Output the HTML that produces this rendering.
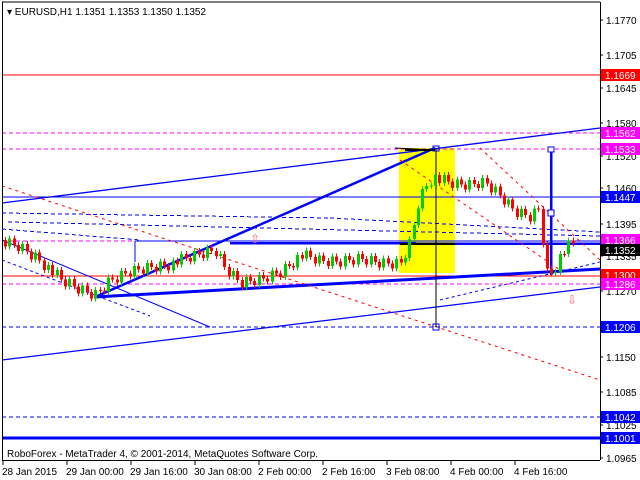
<!DOCTYPE html>
<html><head><meta charset="utf-8"><style>
html,body{margin:0;padding:0;background:#fff;width:640px;height:480px;overflow:hidden}
svg{display:block;font-family:"Liberation Sans",sans-serif}
</style></head><body>
<svg id="s" width="640" height="480" xmlns="http://www.w3.org/2000/svg" shape-rendering="crispEdges">
<rect x="0" y="0" width="640" height="480" fill="#fff"/>
<rect x="399" y="148" width="56" height="125" fill="#ffff00"/>
<line x1="2" y1="75" x2="600" y2="75" stroke="#f00"/>
<line x1="2" y1="133" x2="600" y2="133" stroke="#f0f" stroke-dasharray="4,3"/>
<line x1="2" y1="149" x2="600" y2="149" stroke="#f0f" stroke-dasharray="4,3"/>
<line x1="2" y1="197" x2="600" y2="197" stroke="#00f"/>
<line x1="2" y1="241" x2="600" y2="241" stroke="#f0f" stroke-dasharray="4,3"/>
<line x1="135" y1="241" x2="600" y2="241" stroke="#00f"/>
<line x1="230" y1="243" x2="600" y2="244" stroke="#00f" stroke-width="2.5"/>
<line x1="135" y1="241" x2="135" y2="262" stroke="#00f"/>
<line x1="2" y1="276" x2="600" y2="276" stroke="#f00"/>
<line x1="2" y1="284" x2="600" y2="284" stroke="#f0f" stroke-dasharray="4,3"/>
<line x1="2" y1="327" x2="600" y2="327" stroke="#00f" stroke-dasharray="4,3"/>
<line x1="2" y1="417" x2="600" y2="417" stroke="#00f" stroke-dasharray="4,3"/>
<line x1="2" y1="438" x2="600" y2="438" stroke="#00f" stroke-width="3"/>
<line x1="2" y1="213" x2="330" y2="218" stroke="#00f" stroke-dasharray="4,3"/>
<line x1="330" y1="218" x2="600" y2="232" stroke="#00f" stroke-dasharray="4,3"/>
<line x1="8" y1="222" x2="600" y2="236" stroke="#00f" stroke-dasharray="4,3"/>
<line x1="2" y1="229" x2="140" y2="240" stroke="#00f" stroke-dasharray="4,3"/>
<g shape-rendering="auto">
<line x1="2" y1="203" x2="600" y2="128" stroke="#00f" stroke-width="1.3"/>
<line x1="2" y1="360" x2="600" y2="287" stroke="#00f" stroke-width="1.3"/>
<line x1="95" y1="297" x2="435" y2="148" stroke="#00f" stroke-width="2.5"/>
<line x1="95" y1="297" x2="600" y2="269" stroke="#00f" stroke-width="3"/>
<line x1="2" y1="186" x2="600" y2="380" stroke="#f00" stroke-dasharray="3,4"/>
<line x1="480" y1="148" x2="600" y2="260" stroke="#f00" stroke-dasharray="3,4"/>
<line x1="400" y1="160" x2="560" y2="270" stroke="#f00" stroke-dasharray="3,4"/>
<line x1="2" y1="240" x2="210" y2="327" stroke="#00f" stroke-width="1"/>
<line x1="2" y1="260" x2="150" y2="316" stroke="#00f" stroke-dasharray="3,3"/>
<line x1="440" y1="300" x2="600" y2="262" stroke="#00f" stroke-dasharray="3,3"/>
<line x1="395" y1="148" x2="435" y2="150" stroke="#000"/>
<line x1="405" y1="150" x2="435" y2="150" stroke="#000" stroke-width="2"/>
<line x1="400" y1="244" x2="455" y2="244" stroke="#000" stroke-width="2"/>
</g>
<line x1="436" y1="148" x2="436" y2="327" stroke="#000"/>
<rect x="433" y="324" width="6" height="6" fill="none" stroke="#00f"/>
<rect x="433" y="146" width="6" height="5" fill="none" stroke="#00f"/>
<line x1="551" y1="149" x2="551" y2="275" stroke="#00f" stroke-width="2.5"/>
<rect x="548" y="147" width="6" height="5" fill="#fff" stroke="#00f"/>
<rect x="548" y="210" width="6" height="6" fill="#fff" stroke="#00f"/>
<g id="c"></g>
<text x="250" y="243" font-size="12" fill="#f66">⇧</text>
<text x="567" y="304" font-size="12" fill="#f66">⇩</text>
<line x1="2" y1="2" x2="600" y2="2" stroke="#000"/>
<line x1="2.5" y1="2" x2="2.5" y2="460" stroke="#000"/>
<line x1="600.5" y1="2" x2="600.5" y2="460" stroke="#000"/>
<line x1="2" y1="460.5" x2="600" y2="460.5" stroke="#000"/>
<g id="ax" font-size="10" fill="#000"></g>
<text x="7" y="15" font-size="10">▾ EURUSD,H1  1.1351 1.1353 1.1350 1.1352</text>
<text x="7" y="457" font-size="10">RoboForex - MetaTrader 4, © 2001-2014, MetaQuotes Software Corp.</text>
</svg>
<script>
var ns="http://www.w3.org/2000/svg",ax=document.getElementById("ax"),c=document.getElementById("c");
function el(t,a,p){var e=document.createElementNS(ns,t);for(var k in a)e.setAttribute(k,a[k]);(p||ax).appendChild(e);return e}
function tx(s,x,y,f,p){var e=el("text",{x:x,y:y,fill:f||"#000"},p);e.textContent=s;return e}
[["1.1770",20],["1.1705",55],["1.1645",88],["1.1580",123],["1.1520",156],["1.1460",188],["1.1395",224],["1.1335",256],["1.1270",291],["1.1150",357],["1.1085",392],["1.1025",425],["1.0965",458]].forEach(function(a){el("line",{x1:600,y1:a[1],x2:603,y2:a[1],stroke:"#000"});tx(a[0],606,a[1]+4)});
[["1.1669",75,"#f00"],["1.1562",133,"#f0f"],["1.1533",149,"#f0f"],["1.1447",197,"#00f"],["1.1366",240,"#f0f"],["1.1352",250,"#000"],["1.1300",275,"#f00"],["1.1286",284,"#f0f"],["1.1206",327,"#00f"],["1.1042",417,"#00f"],["1.1001",438,"#00f"]].forEach(function(a){el("rect",{x:601,y:a[1]-6,width:39,height:12,fill:a[2]});tx(a[0],605,a[1]+4,"#fff")});
[["28 Jan 2015",2],["29 Jan 00:00",66],["29 Jan 16:00",130],["30 Jan 08:00",194],["2 Feb 00:00",258],["2 Feb 16:00",322],["3 Feb 08:00",386],["4 Feb 00:00",450],["4 Feb 16:00",514]].forEach(function(a){el("line",{x1:a[1]+1,y1:460,x2:a[1]+1,y2:465,stroke:"#000"});tx(a[0],a[1],475)});
var k=[[5,240],[20,245],[40,258],[60,280],[80,290],[95,295],[110,280],[130,270],[150,265],[175,262],[200,255],[215,250],[225,268],[240,282],[260,278],[280,270],[300,255],[320,262],[340,262],[360,258],[380,262],[400,262],[410,240],[418,200],[425,185],[433,175],[440,180],[455,185],[470,185],[485,182],[500,195],[515,210],[530,215],[540,205],[545,270],[550,272],[555,265],[560,255],[570,245],[575,245]];
function py(x){for(var i=1;i<k.length;i++)if(x<=k[i][0]){var a=k[i-1],b=k[i];return a[1]+(b[1]-a[1])*(x-a[0])/(b[0]-a[0])}return 245}
var prev=py(5);
for(var x=5;x<=575;x+=4.3){var cl=py(x)+((x*7)%9-4)*1.6,o=prev,hi=Math.min(o,cl)-3,lo=Math.max(o,cl)+3;var col=cl<o?"#0c0":"#f00";var xx=Math.round(x);
el("line",{x1:xx+.5,y1:hi,x2:xx+.5,y2:lo,stroke:col},c);el("rect",{x:xx-1,y:Math.min(o,cl),width:3,height:Math.max(1,Math.abs(o-cl)),fill:col},c);prev=cl}
</script>
</body></html>
